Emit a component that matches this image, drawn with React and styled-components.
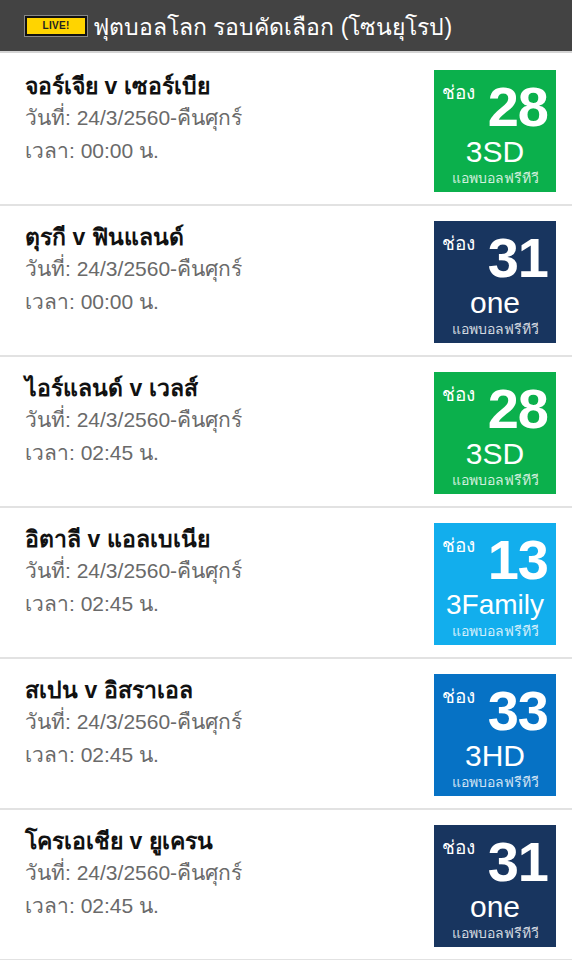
import React from 'react'
import styled, { createGlobalStyle } from 'styled-components'

const GlobalStyle = createGlobalStyle`
  html, body {
    margin: 0;
    padding: 0;
    background: #ffffff;
    font-family: "Liberation Sans", Arial, sans-serif;
  }
`

const Page = styled.div`
  width: 572px;
  height: 960px;
  overflow: hidden;
  background: #ffffff;
`

const Header = styled.div`
  height: 51px;
  background: #434343;
  border-bottom: 2px solid #d4d4d4;
  display: flex;
  align-items: center;
  padding-left: 25px;
  gap: 6px;
`

const LiveBadge = styled.div`
  width: 58px;
  height: 16px;
  border: 2px solid #111;
  background: #ffd400;
  display: flex;
  align-items: center;
  justify-content: center;
  font-size: 10px;
  font-weight: 700;
  color: #222;
  letter-spacing: 0.3px;
  box-shadow: 0 0 0 1px #888;
`

const Title = styled.h1`
  margin: 0;
  padding-top: 3px;
  color: #ffffff;
  font-size: 23px;
  font-weight: 400;
  line-height: 1;
`

const List = styled.div`
  padding-top: 2px;
`

const Row = styled.div`
  display: flex;
  justify-content: space-between;
  align-items: flex-start;
  padding: 15px 16px 12px 25px;
  border-bottom: 2px solid #e2e2e2;
`

const Info = styled.div`
  display: flex;
  flex-direction: column;
  padding-top: 1px;
`

const Match = styled.div`
  font-size: 23px;
  font-weight: 700;
  color: #111;
  line-height: 30px;
`

const Detail = styled.div`
  font-size: 21px;
  color: #6a6a6a;
  line-height: 33px;
`

const Channel = styled.div`
  width: 122px;
  height: 122px;
  background: ${p => p.$bg};
  color: #ffffff;
  display: flex;
  flex-direction: column;
  align-items: center;
  box-sizing: border-box;
  padding: 9px 8px 0 8px;
`

const ChannelTop = styled.div`
  display: flex;
  justify-content: space-between;
  align-items: flex-start;
  width: 100%;
`

const ChannelLabel = styled.span`
  font-size: 19px;
  line-height: 1;
  padding-top: 4px;
`

const ChannelNumber = styled.span`
  font-size: 56px;
  font-weight: 700;
  line-height: 56px;
  letter-spacing: -1px;
`

const ChannelName = styled.div`
  font-size: ${p => (p.$small ? '28px' : '30px')};
  line-height: 34px;
`

const AppLabel = styled.div`
  font-size: 14px;
  line-height: 18px;
  color: rgba(255, 255, 255, 0.82);
`

const matches = [
  { teams: 'จอร์เจีย v เซอร์เบีย', date: '24/3/2560-คืนศุกร์', time: '00:00', ch: '28', name: '3SD', bg: '#0bb04c' },
  { teams: 'ตุรกี v ฟินแลนด์', date: '24/3/2560-คืนศุกร์', time: '00:00', ch: '31', name: 'one', bg: '#18355f' },
  { teams: 'ไอร์แลนด์ v เวลส์', date: '24/3/2560-คืนศุกร์', time: '02:45', ch: '28', name: '3SD', bg: '#0bb04c' },
  { teams: 'อิตาลี v แอลเบเนีย', date: '24/3/2560-คืนศุกร์', time: '02:45', ch: '13', name: '3Family', bg: '#12aeed' },
  { teams: 'สเปน v อิสราเอล', date: '24/3/2560-คืนศุกร์', time: '02:45', ch: '33', name: '3HD', bg: '#0672c5' },
  { teams: 'โครเอเชีย v ยูเครน', date: '24/3/2560-คืนศุกร์', time: '02:45', ch: '31', name: 'one', bg: '#18355f' },
]

export default function App() {
  return (
    <Page>
      <GlobalStyle />
      <Header>
        <LiveBadge>LIVE!</LiveBadge>
        <Title>ฟุตบอลโลก รอบคัดเลือก (โซนยุโรป)</Title>
      </Header>
      <List>
        {matches.map((m, i) => (
          <Row key={i}>
            <Info>
              <Match>{m.teams}</Match>
              <Detail>วันที่: {m.date}</Detail>
              <Detail>เวลา: {m.time} น.</Detail>
            </Info>
            <Channel $bg={m.bg}>
              <ChannelTop>
                <ChannelLabel>ช่อง</ChannelLabel>
                <ChannelNumber>{m.ch}</ChannelNumber>
              </ChannelTop>
              <ChannelName $small={m.name.length > 4}>{m.name}</ChannelName>
              <AppLabel>แอพบอลฟรีทีวี</AppLabel>
            </Channel>
          </Row>
        ))}
      </List>
    </Page>
  )
}
